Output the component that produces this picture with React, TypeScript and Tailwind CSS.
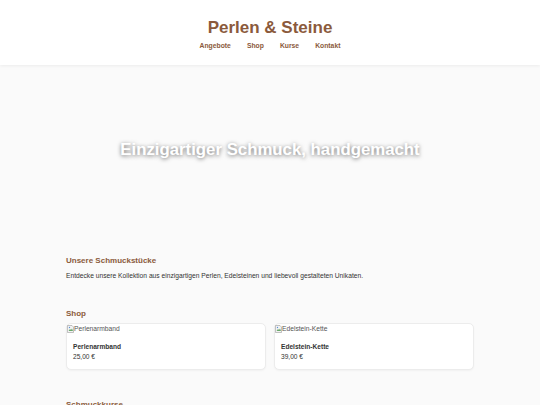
import React from "react";

const products = [
  { name: "Perlenarmband", price: "25,00 €" },
  { name: "Edelstein-Kette", price: "39,00 €" },
];

function BrokenImage({ alt }: { alt: string }) {
  return (
    <div className="flex items-center h-[10px] text-[6.7px] text-[#555] leading-none">
      <svg width="7" height="8" viewBox="0 0 14 16" className="shrink-0">
        <path d="M1 1h9l3 3v11H1z" fill="#f3f3f3" stroke="#9a9a9a" strokeWidth="1.2" />
        <path d="M3 12l3-4 2 2 2-3 2 5z" fill="#6aa86a" />
        <circle cx="5" cy="5" r="1.3" fill="#5b8fd6" />
      </svg>
      <span>{alt}</span>
    </div>
  );
}

export default function App() {
  return (
    <div className="min-h-[405px] bg-[#fafafa] font-['Liberation_Sans',Arial,sans-serif] text-[#333]">
      <header className="bg-white h-[65px] shadow-[0_1px_3px_rgba(0,0,0,0.06)] flex flex-col items-center pt-[18px]">
        <h1 className="text-[17px] font-bold text-[#8b5a3c] leading-[20px]">Perlen &amp; Steine</h1>
        <nav className="flex gap-[16px] mt-[3px] text-[6.8px] font-bold text-[#8b5a3c] leading-[10px]">
          <a>Angebote</a>
          <a>Shop</a>
          <a>Kurse</a>
          <a>Kontakt</a>
        </nav>
      </header>

      <section className="h-[170px] flex items-center justify-center">
        <h2 className="text-[16.8px] font-bold text-white [text-shadow:0_1px_4px_rgba(0,0,0,0.55)]">
          Einzigartiger Schmuck, handgemacht
        </h2>
      </section>

      <main className="w-[408px] mx-auto pt-[20px]">
        <section>
          <h3 className="text-[8px] font-bold text-[#8b5a3c] leading-[12px]">Unsere Schmuckstücke</h3>
          <p className="text-[6.7px] mt-[4px] leading-[10px]">
            Entdecke unsere Kollektion aus einzigartigen Perlen, Edelsteinen und liebevoll gestalteten Unikaten.
          </p>
        </section>

        <section className="mt-[27px]">
          <h3 className="text-[8px] font-bold text-[#8b5a3c] leading-[12px]">Shop</h3>
          <div className="grid grid-cols-2 gap-[8px] mt-[3px]">
            {products.map((p) => (
              <div key={p.name} className="bg-white rounded-[5px] border border-[#ececec] shadow-[0_1px_2px_rgba(0,0,0,0.04)] h-[47px]">
                <BrokenImage alt={p.name} />
                <div className="px-[6px] pt-[8px]">
                  <div className="text-[6.6px] font-bold leading-[10px]">{p.name}</div>
                  <div className="text-[6.6px] leading-[10px]">{p.price}</div>
                </div>
              </div>
            ))}
          </div>
        </section>

        <section className="mt-[29px]">
          <h3 className="text-[8px] font-bold text-[#8b5a3c] leading-[12px]">Schmuckkurse</h3>
        </section>
      </main>
    </div>
  );
}
